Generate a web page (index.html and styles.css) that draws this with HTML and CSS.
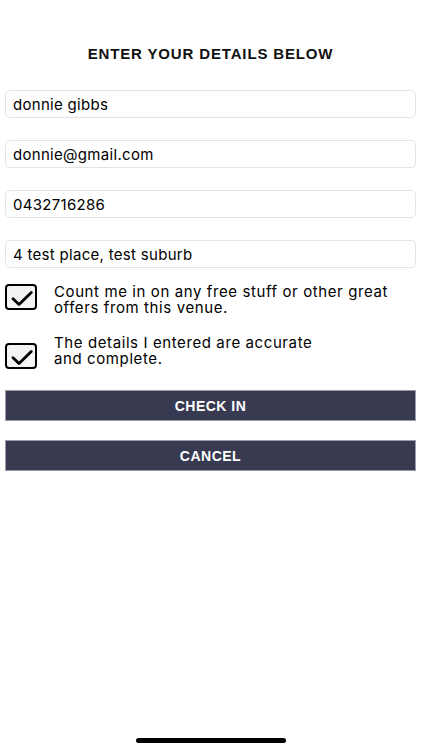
FILE: index.html
```html
<!DOCTYPE html>
<html>
<head>
<meta charset="utf-8">
<link rel="stylesheet" href="styles.css">
</head>
<body>
<div class="screen">
  <h1 class="title">ENTER YOUR DETAILS BELOW</h1>
  <div class="fields">
    <div class="field">donnie gibbs</div>
    <div class="field">donnie@gmail.com</div>
    <div class="field">0432716286</div>
    <div class="field">4 test place, test suburb</div>
  </div>
  <div class="check-row row-offers">
    <span class="box"><svg width="32" height="26" viewBox="0 0 32 26"><path d="M8 14.8 L14 20.6 L26.3 8.6" fill="none" stroke="#000" stroke-width="2.8" stroke-linecap="round" stroke-linejoin="round"/></svg></span>
    <p class="label">Count me in on any free stuff or other great<br>offers from this venue.</p>
  </div>
  <div class="check-row row-accurate">
    <span class="box"><svg width="32" height="26" viewBox="0 0 32 26"><path d="M8 14.8 L14 20.6 L26.3 8.6" fill="none" stroke="#000" stroke-width="2.8" stroke-linecap="round" stroke-linejoin="round"/></svg></span>
    <p class="label">The details I entered are accurate<br>and complete.</p>
  </div>
  <div class="buttons">
    <div class="btn">CHECK IN</div>
    <div class="btn">CANCEL</div>
  </div>
  <div class="home-bar"></div>
</div>
</body>
</html>
```
FILE: styles.css
```css
* { box-sizing: border-box; }
html, body { margin: 0; padding: 0; background: #fff; }
.screen {
  position: relative;
  width: 422px;
  height: 750px;
  padding: 44px 6px 0 5px;
  font-family: Inter, "Liberation Sans", sans-serif;
  color: #000;
}
.title {
  margin: 0;
  height: 20px;
  line-height: 20px;
  text-align: center;
  font-family: "Liberation Sans", Arial, sans-serif;
  font-weight: bold;
  font-size: 15px;
  letter-spacing: 0.85px;
  color: #111;
}
.fields {
  margin-top: 26px;
  display: flex;
  flex-direction: column;
  gap: 22px;
}
.field {
  height: 28px;
  border: 1px solid #e4e4e4;
  border-radius: 5px;
  padding-left: 7px;
  display: flex;
  align-items: center;
  font-size: 15px;
  letter-spacing: 0.3px;
}
.check-row {
  display: flex;
  align-items: flex-start;
  gap: 17px;
}
.row-offers { margin-top: 16px; }
.row-accurate { margin-top: 19px; }
.row-accurate .box { margin-top: 8px; }
.box {
  flex: none;
  width: 32px;
  height: 26px;
  border: 2px solid #000;
  border-radius: 4px;
  background: #f3f3f3;
  position: relative;
}
.box svg { position: absolute; left: -2px; top: -2px; }
.label {
  margin: 0;
  font-size: 15px;
  line-height: 16px;
  letter-spacing: 0.6px;
}
.buttons {
  margin-top: 21px;
  display: flex;
  flex-direction: column;
  gap: 19px;
}
.btn {
  height: 31px;
  background: #383a51;
  border: 1px solid #9a9ba6;
  color: #fff;
  display: flex;
  align-items: center;
  justify-content: center;
  font-family: "Liberation Sans", Arial, sans-serif;
  font-weight: bold;
  font-size: 14px;
  letter-spacing: 0.5px;
}
.home-bar {
  position: absolute;
  left: 136px;
  top: 738px;
  width: 150px;
  height: 5px;
  border-radius: 3px;
  background: #000;
}
```
